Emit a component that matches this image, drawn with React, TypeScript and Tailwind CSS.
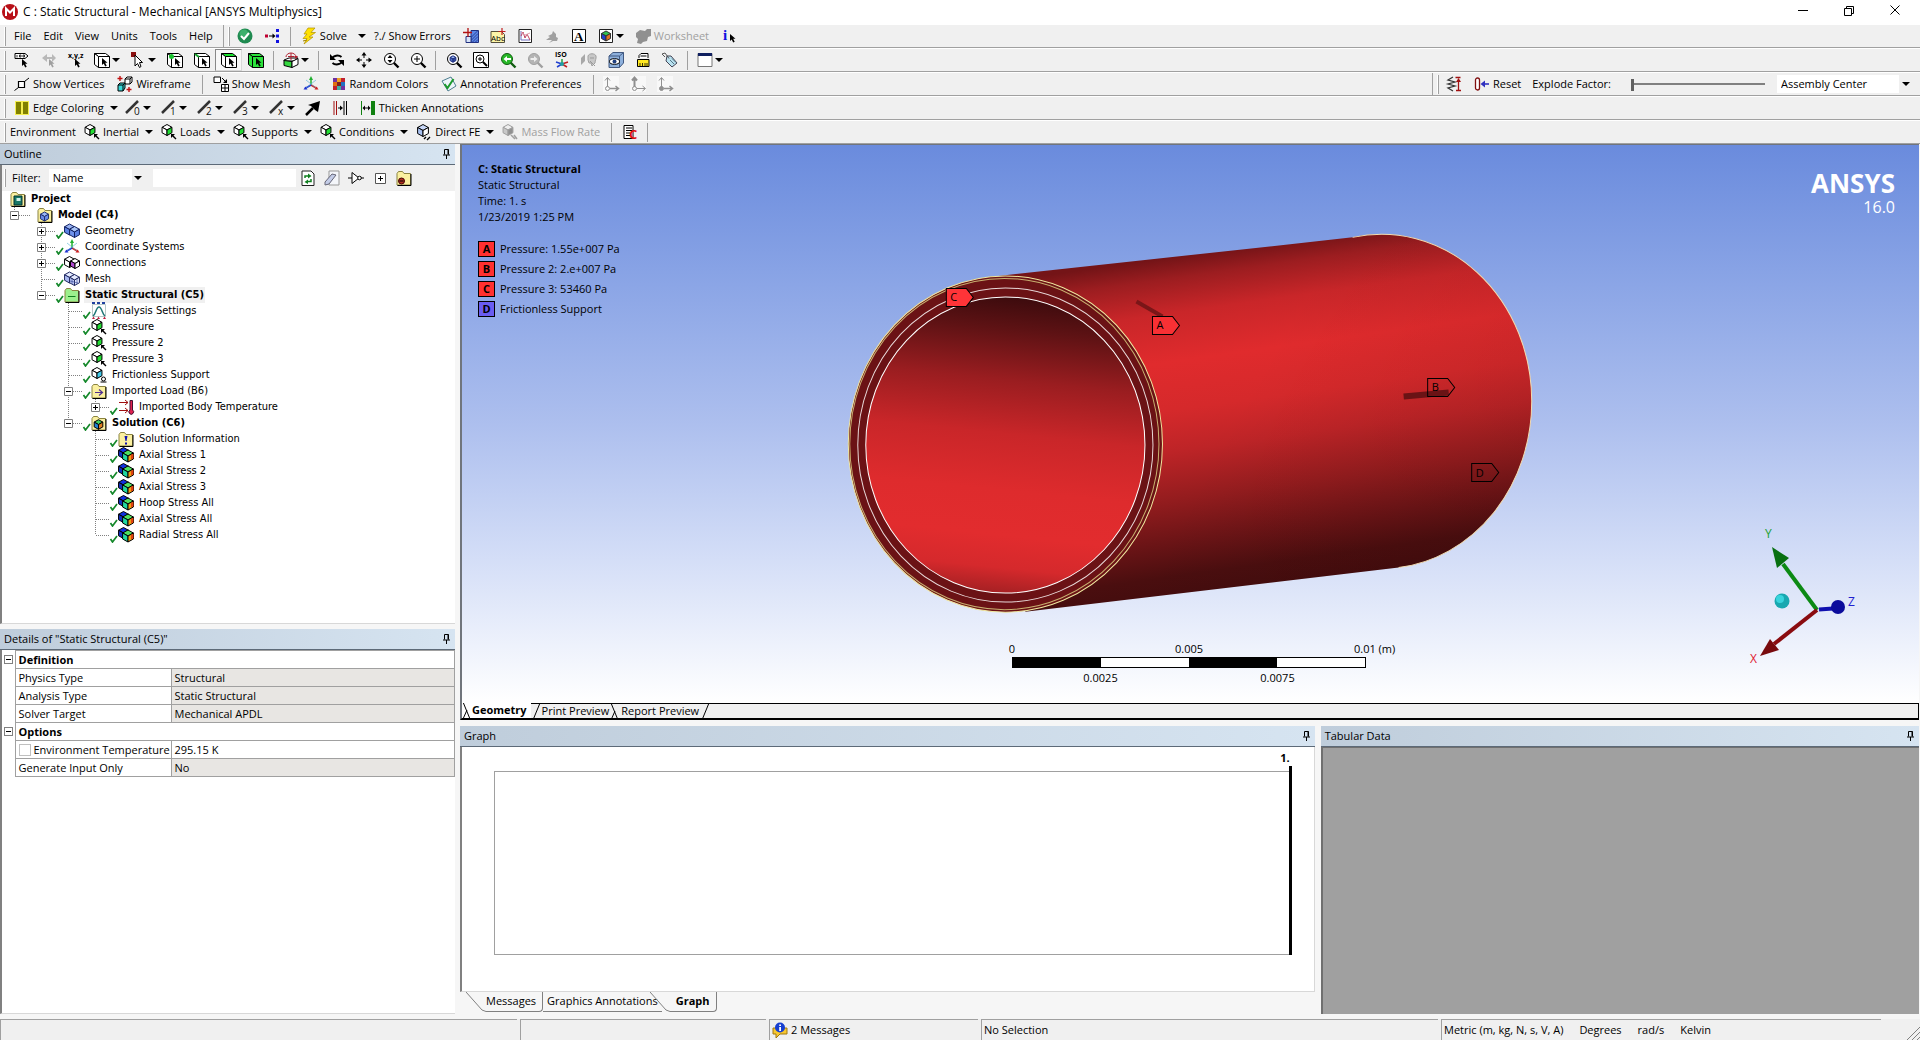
import { Fragment, useState, type ReactNode } from "react";

type HexProps = {
  x: number;
  y: number;
  r: number;
  top: string;
  left: string;
  right: string;
  stroke?: string;
};

function Hex({ x, y, r, top, left, right, stroke = "#000" }: HexProps) {
  const w = r * 0.9;
  const h = r / 2;
  return (
    <g stroke={stroke} strokeWidth={1} strokeLinejoin="round">
      <path d={`M${x} ${y - r}l${w} ${h}l${-w} ${h}l${-w} ${-h}z`} fill={top} />
      <path d={`M${x - w} ${y - h}l${w} ${h}v${r}l${-w} ${-h}z`} fill={left} />
      <path d={`M${x + w} ${y - h}l${-w} ${h}v${r}l${w} ${-h}z`} fill={right} />
    </g>
  );
}

function Pointer({ x, y, fill = "#000" }: { x: number; y: number; fill?: string }) {
  return <path d={`M${x} ${y}v7l1.7 -1.5l1.5 3l1.5 -0.7l-1.5 -3h2.3z`} fill={fill} />;
}

function Box({ front = "#fff", top = "#fff", side = "#fff" }) {
  return (
    <g stroke="#000">
      <path d="M0.5 1.5h11l4 3h-11z" fill={top} />
      <path d="M0.5 1.5l4 3v11l-4-3z" fill={side} />
      <path d="M4.5 4.5h11v11h-11z" fill={front} />
    </g>
  );
}

function Folder({ fill = "#fbf0a0", children }: { fill?: string; children?: ReactNode }) {
  return (
    <>
      <path d="M1 3.5L2.5 1.5h4L8 3.5h6.5V15H1z" fill={fill} stroke="#8a8340" />
      <path d="M15 4v11.5H1.5" fill="none" stroke="#000" />
      {children}
    </>
  );
}

function Lens({ glass = "#fff", stroke = "#000" }) {
  return (
    <>
      <path d="M10.5 10.5l5 5" stroke={stroke} strokeWidth={2.4} />
      <circle cx={7} cy={7} r={5.5} fill={glass} stroke={stroke} />
    </>
  );
}

function Load() {
  return (
    <>
      <Hex x={6} y={6} r={5.5} top="#fff" left="#fff" right="#22dd33" />
      <path d="M10 10h4l-1.5 1.5 3 3-1 1-3-3L10 14z" fill="#000" />
    </>
  );
}

function Result() {
  return (
    <>
      <Hex x={5.5} y={6} r={5.5} top="#1030e0" left="#1030c0" right="#10a0e0" />
      <Hex x={10} y={9} r={6} top="#50e060" left="#20d8a0" right="#f0a010" />
      <path d="M13 8l2.4-1.3v4.5L13 12.5z" fill="#e04010" />
    </>
  );
}

function Edge({ mark }: { mark: string }) {
  return (
    <>
      <path d="M1 13L13 1" stroke="#333" strokeWidth={2.5} />
      <text x={9} y={15} fontSize={10} fill="#111">
        {mark}
      </text>
    </>
  );
}

const axes = (
  <>
    <path d="M8 10V2" stroke="#20b030" strokeWidth={1.5} />
    <path d="M8 0l2 4H6z" fill="#20b030" />
    <path d="M8 9l6 3.5" stroke="#d02020" strokeWidth={1.5} />
    <path d="M15.5 13.5h-4l2-3z" fill="#d02020" />
    <path d="M8 9l-6 3.5" stroke="#2030d0" strokeWidth={1.5} />
    <path d="M0.5 13.5h4l-2-3z" fill="#2030d0" />
    <path d="M3 4l10 8M13 4L3 12" stroke="#50b0d0" strokeWidth={0.6} />
  </>
);

const triad = (filled: boolean, bold: boolean) => (
  <>
    <rect width={16} height={16} fill="#f8f8f8" />
    <path d="M4.5 11V2M2 4.5L4.5 1.5 7 4.5" fill="none" stroke="#909090" strokeWidth={bold ? 2 : 1} />
    <path d="M7 12.5h8M12.5 10l3 2.5-3 2.5" fill="none" stroke="#909090" strokeWidth={bold ? 1 : 1.5} />
    <circle cx={4.5} cy={12.5} r={2} fill={filled ? "#909090" : "#f8f8f8"} stroke="#909090" />
  </>
);

const icons = {
  check: (
    <>
      <circle cx={8} cy={8} r={7.5} fill="#1f8a50" />
      <circle cx={7} cy={6} r={4.5} fill="#3cb06c" />
      <path d="M4 8l3 3 5-6" fill="none" stroke="#fff" strokeWidth={2} />
    </>
  ),
  dots: (
    <>
      <path d="M1 6.5h3v3H1z" fill="#c00030" />
      <path d="M5 8h5" stroke="#000" />
      <path d="M8.5 5.5L11.5 8l-3 2.5z" fill="#000" />
      <path d="M12 1h3v3h-3zM12 6.5h3v3h-3zM12 12h3v3h-3z" fill="#1010e0" />
    </>
  ),
  bolt: (
    <>
      <path d="M7 0h7l-4 4.5h4.5L8 9h4L3 16l3-5.5H2L6 6H3z" fill="#ffe100" stroke="#b09000" strokeWidth={0.7} />
      <path d="M2 13l4-1" stroke="#a08000" />
    </>
  ),
  section: (
    <>
      <path d="M8 2.5h7.5v12H8z" fill="#5b86e8" stroke="#203080" />
      <path d="M3 8.5h5v6H3z" fill="#d7e3f8" stroke="#203080" />
      <path d="M8.5 9l6-6M8.5 12l6.5-6.5M9 14.5l6-6M12 14.5l3-3" stroke="#203080" strokeWidth={0.8} />
      <path d="M5 0v9M0 4.5h9" stroke="#b01010" strokeWidth={1.3} />
    </>
  ),
  abc: (
    <>
      <path d="M1 3.5h10.5l3 3v8H1z" fill="#fdf5a8" stroke="#55503a" />
      <text x={1} y={13} fontSize={8}>
        Abc
      </text>
      <path d="M12 0v7M8.5 3.5h7" stroke="#c02020" strokeWidth={1.2} />
    </>
  ),
  chart: (
    <>
      <path d="M2 1.5h12.5v13H2z" fill="#fff" stroke="#222" />
      <path d="M4 3v9h9" fill="none" stroke="#7070c0" />
      <path d="M4 8l2-4 2 6 2-4 3 6" fill="none" stroke="#c04060" />
      <path d="M4 4l4 3 5-2" fill="none" stroke="#e0a0b0" />
    </>
  ),
  comment: <path d="M5 15l3-3H2l4-3-2-1 4-2 1-3 3 3v3l2 1-1 3H9z" fill="#a0a0a0" />,
  letter: (
    <>
      <path d="M1.5 1.5h13v13h-13z" fill="#fff" stroke="#111" />
      <text x={3} y={13} fontSize={13} fontWeight={700} className="font-['Liberation_Serif',serif]">
        A
      </text>
    </>
  ),
  image: (
    <>
      <path d="M1.5 1.5h13v13h-13z" fill="#fff" stroke="#222" />
      <Hex x={8} y={8} r={5} top="#30c050" left="#2040d0" right="#e07020" stroke="#333" />
    </>
  ),
  worksheet: <path d="M1 5l4-3 5 1 2-2h4v7l-3 1-1 4-4 1-2 2-4-1 1-4-2-2z" fill="#909090" />,
  info: (
    <>
      <text x={1} y={12} fontSize={15} fontWeight={700} fill="#1010e0" className="font-['Liberation_Serif',serif]">
        i
      </text>
      <Pointer x={8} y={6} />
    </>
  ),
  tag: (
    <>
      <path d="M1 1.5h10l3 2.5-3 2.5H1z" fill="#fff" stroke="#000" />
      <path d="M3 3v2.500M5.5 3v2H7V3zM9 3v2h1.5V3z" stroke="#000" fill="none" strokeWidth={0.8} />
      <Pointer x={8} y={7} />
    </>
  ),
  tagOff: (
    <>
      <path d="M1 6l5-4v3h5V2l4 4-4 4V7H6v3z" fill="#b8b8b8" />
      <Pointer x={8} y={7} fill="#a0a0a0" />
    </>
  ),
  xyz: (
    <>
      <text x={0} y={6} fontSize={7} fontWeight={700}>
        x,y,z
      </text>
      <Pointer x={7} y={7} />
    </>
  ),
  boxMode: (
    <>
      <Box />
      <Pointer x={8} y={6} />
    </>
  ),
  pick: (
    <>
      <path d="M1 0h5v5H1z" fill="#8b1010" />
      <path d="M5 3v11l2.5-2.5 2 4 1.5-1-1.5-4h3z" fill="#fff" stroke="#000" />
    </>
  ),
  selVertex: (
    <>
      <Box />
      <circle cx={4.5} cy={4.5} r={2.5} fill="#19c22e" />
      <Pointer x={8} y={6} />
    </>
  ),
  selEdge: (
    <>
      <Box />
      <path d="M1 2l4 3" stroke="#19a22e" strokeWidth={2} />
      <Pointer x={8} y={6} />
    </>
  ),
  selFace: (
    <>
      <Box top="#19e22e" />
      <Pointer x={8} y={6} />
    </>
  ),
  selBody: (
    <>
      <Box front="#2be23c" top="#2be23c" side="#2be23c" />
      <Pointer x={8} y={6} />
    </>
  ),
  extend: (
    <>
      <path d="M1 8l5-2h9l-4 3H1z" fill="#fff" stroke="#000" />
      <path d="M1 8.5l8 1v6l-8-2z" fill="#35d840" stroke="#000" />
      <path d="M9 9.5l6-3v6l-6 3z" fill="#fff" stroke="#000" />
      <path d="M3 5a5 4 0 0 1 10 0M8 1v7M5 4.5h6" fill="none" stroke="#b02030" />
      <path d="M11 4h4l-2 3z" fill="#b02030" />
    </>
  ),
  rotate: (
    <>
      <path d="M3 6.5a5.5 4 0 0 1 9.5 -1.5M13 9.5a5.5 4 0 0 1 -9.5 1.5" fill="none" stroke="#000" strokeWidth={2} />
      <path d="M1 2v6h6zM15 14V8H9z" fill="#000" />
    </>
  ),
  pan: (
    <>
      <path d="M8 2v4M8 10v4M2 8h4M10 8h4" stroke="#000" />
      <path d="M8 0l2.5 3.5h-5zM8 16l2.5-3.5h-5zM0 8l3.5-2.5v5zM16 8l-3.5-2.5v5z" fill="#000" />
    </>
  ),
  zoom: (
    <>
      <Lens />
      <path d="M7 3l2.5 3h-5zM7 11l2.5-3h-5z" fill="#000" />
    </>
  ),
  zoomIn: (
    <>
      <Lens />
      <path d="M7 4v6M4 7h6" stroke="#000" />
    </>
  ),
  zoomFit: (
    <>
      <Lens />
      <Hex x={7} y={7} r={3.2} top="#9ab8f0" left="#5070c8" right="#304aa0" stroke="#203080" />
    </>
  ),
  zoomBox: (
    <>
      <path d="M0.5 0.5h15v15H0.5z" fill="#fff" stroke="#000" />
      <circle cx={7} cy={7} r={4} fill="none" stroke="#000" />
      <path d="M10 10l4 4" stroke="#000" strokeWidth={2} />
      <path d="M5 7h4M7 5v4" stroke="#000" />
    </>
  ),
  zoomPrev: (
    <>
      <Lens glass="#28b828" stroke="#105c10" />
      <path d="M3.5 7L7 4v2h4v2H7v2z" fill="#fff" />
    </>
  ),
  zoomNext: (
    <>
      <Lens glass="#b4b4b4" stroke="#a0a0a0" />
      <path d="M10.5 7L7 4v2H3.5v2H7v2z" fill="#eee" />
    </>
  ),
  iso: (
    <>
      <text x={1} y={5} fontSize={7} fontWeight={700}>
        ISO
      </text>
      <path d="M8 13V7" stroke="#20a040" strokeWidth={1.5} />
      <path d="M8 12l-6-2M8 12l-5 3" stroke="#2040d0" strokeWidth={1.5} />
      <path d="M8 12l6-2M8 12l5 3" stroke="#c02020" strokeWidth={1.5} />
      <circle cx={8} cy={12} r={2} fill="#20a0a0" />
    </>
  ),
  lookAt: (
    <>
      <path d="M0 6l4-4v7L0 13z" fill="#a8a8a8" />
      <path d="M7 4c1-3 7-3 8 0 .5 3-1 4-1 7l-3 3-1-3H8L7 8z" fill="#c8c8c8" stroke="#a0a0a0" />
      <path d="M9 6h4M9 9l5 5" stroke="#999" />
    </>
  ),
  eye: (
    <>
      <path d="M1 4l4-3.5h10.5V11l-4 4.5H1z" fill="#8db0dc" stroke="#405880" />
      <path d="M1 4h10.5v11.5M11.5 4l4-3.5" fill="none" stroke="#405880" />
      <ellipse cx={6.5} cy={9.5} rx={5} ry={2.8} fill="#fff" stroke="#000" />
      <circle cx={6.5} cy={9.5} r={2} fill="#204080" />
    </>
  ),
  ruler: (
    <>
      <path d="M4 6V3.5L6 1.5h7V6" fill="#fff" stroke="#000" />
      <path d="M5.5 4h6" stroke="#000" />
      <path d="M2.5 7.5H14v7H2.5z" fill="#ffe820" stroke="#000" />
      <path d="M5 11v3M7.5 11v3M10 11v3M12 11v3" stroke="#000" strokeWidth={0.8} />
    </>
  ),
  label: (
    <>
      <path d="M5 4h4l6 7-5 4-6-6z" fill="#b9e2f0" stroke="#445" />
      <path d="M8 8l4 4M10 6.5l4 4" stroke="#578" />
      <path d="M7 6.5L3 1 0 2l3 3" fill="none" stroke="#555" />
    </>
  ),
  viewport: (
    <>
      <path d="M1 1.5h14v13H1z" fill="#fff" stroke="#777" />
      <path d="M1 1h14v3H1z" fill="#102060" />
    </>
  ),
  vertex: (
    <>
      <path d="M4.5 5.5h6v6h-6z" fill="#fff" stroke="#000" strokeWidth={1.2} />
      <path d="M10.5 5.5L15 2M4.5 11.5l-4 3" stroke="#000" />
    </>
  ),
  wire: (
    <>
      <path d="M8 3l2-2h5v5l-2 2H8zM8 3h5v5M13 3l2-2" fill="#fff" stroke="#000" />
      <path d="M1 9l2-2h5v5l-2 3H1zM1 9h5v6M6 9l2-2" fill="#38d8d8" stroke="#000" />
      <path d="M3 0v5M0.5 2.5h5M12 11v5M9.5 13.5h5" stroke="#c01010" strokeWidth={1.4} />
    </>
  ),
  mesh: (
    <>
      <path d="M1 1h6.5v5.5H1z" fill="#fff" stroke="#000" />
      <path d="M8.5 8.5h7v7h-7zM12 8.5v7M8.5 12h7" fill="#fff" stroke="#000" />
      <path d="M9 2l4 4" stroke="#000" />
      <path d="M14 3v4h-4z" fill="#000" />
    </>
  ),
  axes,
  palette: (
    <>
      <path d="M2 2h4v4H2zM10 10h4v4h-4z" fill="#7030a0" />
      <path d="M6 2h4v4H6z" fill="#f0a020" />
      <path d="M10 2h4v4h-4zM2 10h4v4H2z" fill="#c02030" />
      <path d="M2 6h4v4H2z" fill="#e07010" />
      <path d="M6 6h4v4H6z" fill="#802020" />
      <path d="M10 6h4v4h-4z" fill="#2070c0" />
      <path d="M6 10h4v4H6z" fill="#40b0a0" />
    </>
  ),
  annotate: (
    <>
      <path d="M1 5l9-4 5 9-8 5z" fill="#eef5fa" stroke="#4f7f90" />
      <path d="M3.5 8l3 4 6-9" fill="none" stroke="#1c9a2c" strokeWidth={2} />
    </>
  ),
  triadA: triad(false, false),
  triadB: triad(false, true),
  triadC: triad(true, false),
  edges: (
    <>
      <path d="M1 1h14v14H1z" fill="#f4ee50" />
      <path d="M2 2h5v12H2zM9 2h5v12H9z" fill="#808000" />
    </>
  ),
  edge0: <Edge mark="0" />,
  edge1: <Edge mark="1" />,
  edge2: <Edge mark="2" />,
  edge3: <Edge mark="3" />,
  edgeX: <Edge mark="x" />,
  direction: (
    <>
      <path d="M1 15l7-7" stroke="#000" strokeWidth={2.5} />
      <path d="M15 1l-2 11-3-2-4-4-3-1z" fill="#000" />
    </>
  ),
  thickA: (
    <>
      <path d="M2 1v14M4.5 1v14" stroke="#a01010" />
      <path d="M12 1v14M14.5 1v14" stroke="#000" />
      <path d="M6 8h3" stroke="#000" />
      <path d="M8 5.5L11 8l-3 2.5z" fill="#000" />
    </>
  ),
  thickB: (
    <>
      <path d="M1.5 1v14" stroke="#108010" />
      <path d="M11 1h4v14h-4z" fill="#108010" />
      <path d="M4 8h5" stroke="#000" />
      <path d="M2.5 8l2.5-2.5v5zM10.5 8L8 5.5v5z" fill="#000" />
    </>
  ),
  load: <Load />,
  direct: (
    <>
      <Hex x={7} y={6.5} r={6} top="#c8d8f8" left="#a8c0f0" right="#fff" />
      <path d="M8 15l2-2M11 16l3-3" stroke="#000" strokeWidth={1.4} />
    </>
  ),
  mass: (
    <>
      <Hex x={6} y={6} r={5.5} top="#eee" left="#c8c8c8" right="#909090" stroke="#a0a0a0" />
      <path d="M9 11l4 4M12 11l3 4" stroke="#a0a0a0" strokeWidth={1.5} />
    </>
  ),
  commands: (
    <>
      <path d="M2 1.5h9v13H2z" fill="#fff" stroke="#000" />
      <path d="M4 4h6M4 6.5h6M4 9h4M4 11.5h4" stroke="#000" />
      <text x={7} y={15} fontSize={13} fontWeight={700} fill="#e01010">
        C
      </text>
    </>
  ),
  spring: (
    <>
      <path d="M7 1L2 4l7 2-7 2 7 2-7 2 5 3" fill="none" stroke="#333" strokeWidth={1.3} />
      <path d="M12.5 14V4M9.5 1.5h5M10 14.5h5" stroke="#a01010" strokeWidth={1.3} />
      <path d="M12.5 2l2.5 4h-5z" fill="#a01010" />
    </>
  ),
  reset: (
    <>
      <rect x={1.5} y={2} width={4} height={12} rx={2} fill="#fff" stroke="#801010" strokeWidth={1.3} />
      <path d="M9 8h6" stroke="#3030c0" strokeWidth={1.6} />
      <path d="M6.5 8L11 4.5v7z" fill="#3030c0" />
    </>
  ),
  refresh: (
    <>
      <path d="M2 1h9l3 3v11.5H2z" fill="#fff" stroke="#222" />
      <path d="M5 8V6h4M11 9v2.5H7" fill="none" stroke="#108020" strokeWidth={1.5} />
      <path d="M8 3.5L11.5 6 8 8.5zM8 9.5L4.5 12 8 14z" fill="#108020" />
    </>
  ),
  eraser: (
    <>
      <path d="M5 1h10v14H5z" fill="#f4f6fa" stroke="#999" />
      <path d="M1 12l7-8 4 1-7 9-4 1z" fill="#c4cde8" stroke="#667" />
    </>
  ),
  branch: (
    <>
      <path d="M0 8h4M12 8h4" stroke="#000" />
      <path d="M4 2.5L11 8l-7 5.5z" fill="#fff" stroke="#000" />
      <circle cx={11.5} cy={8} r={1.8} fill="#fff" stroke="#000" />
    </>
  ),
  expand: (
    <>
      <path d="M3.5 3.5h10v10h-10z" fill="#fff" stroke="#555" />
      <path d="M8.5 6v5M6 8.5h5" stroke="#000" />
    </>
  ),
  folderStop: (
    <Folder>
      <circle cx={5.5} cy={11} r={3} fill="#b03020" stroke="#400" />
      <path d="M3.5 11h4" stroke="#000" />
    </Folder>
  ),
  project: (
    <Folder>
      <path d="M4 5h8v9H4z" fill="#187868" stroke="#033" />
      <path d="M6.5 7h4v3h-4z" fill="#d0f0e8" />
    </Folder>
  ),
  model: (
    <Folder>
      <Hex x={7.5} y={9.5} r={4.5} top="#9ab8f8" left="#6a8be8" right="#6a8be8" stroke="#203070" />
    </Folder>
  ),
  geometry: (
    <>
      <Hex x={5.5} y={6.5} r={5.5} top="#9ab4f4" left="#5c82e4" right="#5c82e4" stroke="#102060" />
      <Hex x={10.5} y={9} r={5.5} top="#a8c4f8" left="#6e92ec" right="#5c82e4" stroke="#102060" />
    </>
  ),
  connections: (
    <>
      <Hex x={5.5} y={7} r={5.5} top="#fff" left="#fff" right="#a030c0" />
      <Hex x={11} y={8.5} r={5} top="#fff" left="#b048d0" right="#fff" />
    </>
  ),
  meshTree: (
    <>
      <Hex x={5.5} y={6.5} r={5.5} top="#e4eaff" left="#a8b8f0" right="#c8d4f8" stroke="#202860" />
      <Hex x={10.5} y={9} r={5.5} top="#e4eaff" left="#c0ccf8" right="#e4eaff" stroke="#202860" />
      <path d="M8 8v5M13 8v5M6 10l8 2" stroke="#4050a0" strokeWidth={0.7} />
    </>
  ),
  environment: (
    <Folder fill="#9cf08c">
      <path d="M4 9.5h7.5" stroke="#108020" />
    </Folder>
  ),
  settings: (
    <>
      <path d="M1.5 1.5h13v12h-13z" fill="#fff" stroke="#b8c8c8" />
      <path d="M2 13c3-2 3-9 6-9s3 7 6 9" fill="none" stroke="#207878" strokeWidth={1.5} />
      <path d="M1 0h3M6 0h3M11 0h3" stroke="#2040a0" strokeWidth={2} />
      <path d="M1 16l1.5-2.5L4 16zM6 16l1.5-2.5L9 16zM12 16l1.5-2.5L15 16z" fill="#c02040" />
    </>
  ),
  support: (
    <>
      <Hex x={6} y={6} r={5.5} top="#fff" left="#fff" right="#40c8e8" />
      <circle cx={12.5} cy={12} r={2} fill="#fff" stroke="#000" />
      <path d="M9.5 15h6" stroke="#000" />
    </>
  ),
  imported: (
    <Folder>
      <path d="M4 9.5h7M8 6.5l3.5 3-3.5 3" fill="none" stroke="#503090" strokeWidth={1.2} />
    </Folder>
  ),
  temperature: (
    <>
      <path d="M1 3.5h9M1 11.5h9M7 1l3 2.5L7 6M7 9l3 2.5L7 14" fill="none" stroke="#a01010" />
      <path d="M12 1.5h2.5V11a2.3 2.3 0 1 1-2.5 0z" fill="#e02050" stroke="#401030" />
    </>
  ),
  solution: (
    <Folder>
      <Hex x={7.5} y={9.5} r={4.8} top="#40d060" left="#2080d0" right="#e08020" />
    </Folder>
  ),
  solutionInfo: (
    <Folder>
      <path d="M6.5 5h3l-1 5h-1zM7 11.5h2v2H7z" fill="#1010b0" />
    </Folder>
  ),
  result: <Result />,
  messages: (
    <>
      <path d="M1 6h14v6H8l-4 4v-4H1z" fill="#f8c830" stroke="#a07810" />
      <circle cx={8} cy={5.5} r={5} fill="#1840d0" />
      <path d="M7.2 2.5H9V4H7.2zM7.2 5H9v4H7.2z" fill="#fff" />
    </>
  ),
} satisfies Record<string, ReactNode>;

type IconName = keyof typeof icons;

function Icon({ name }: { name: IconName }) {
  return (
    <svg viewBox="0 0 16 16" className="size-4 shrink-0 overflow-visible" fill="#000" aria-hidden="true">
      {icons[name]}
    </svg>
  );
}

function Caret() {
  return (
    <svg viewBox="0 0 8 4" className="h-1 w-2 shrink-0" aria-hidden="true">
      <path d="M0 0h8L4 4z" />
    </svg>
  );
}

const Grip = () => <span className="mr-0.5 ml-1 h-[19px] w-0.5 shrink-0 border-r border-[#a0a0a0] bg-white" />;
const Divider = () => <span className="mx-1 h-[19px] w-px shrink-0 bg-[#a0a0a0]" />;

type ToolProps = {
  icon?: IconName;
  label?: string;
  menu?: boolean;
  split?: boolean;
  pressed?: boolean;
  disabled?: boolean;
};

function Tool({ icon, label, menu, split, pressed, disabled }: ToolProps) {
  if (!label) {
    return (
      <button
        aria-label={icon}
        disabled={disabled}
        className={`flex h-[22px] shrink-0 items-center justify-center gap-[2px] ${menu ? "w-9" : "w-[27px]"} ${
          pressed ? "border border-[#d8d8d8] border-l-[#888] border-t-[#888] bg-[#f8f8f8]" : ""
        }`}
      >
        {icon && <Icon name={icon} />}
        {menu && <Caret />}
      </button>
    );
  }
  return (
    <button
      disabled={disabled}
      className={`flex h-[22px] shrink-0 items-center gap-[3px] pl-1.5 whitespace-nowrap disabled:text-[#a0a0a0] ${
        menu ? "pr-0.5" : "pr-[7px]"
      }`}
    >
      {icon && <Icon name={icon} />}
      {label}
      {menu && (
        <span className={split ? "pl-2" : "pl-[3px]"}>
          <Caret />
        </span>
      )}
    </button>
  );
}

function ToolRow({ children }: { children: ReactNode }) {
  return <div className="flex h-6 items-center border-t border-b border-[#a0a0a0] border-t-white">{children}</div>;
}

function Toolbars() {
  const [factor, setFactor] = useState(0);

  return (
    <header className="shrink-0 bg-[#f0f0f0]">
      <ToolRow>
        <Grip />
        <nav className="flex items-center gap-3 px-1.5">
          {["File", "Edit", "View", "Units", "Tools", "Help"].map((item) => (
            <button key={item}>{item}</button>
          ))}
        </nav>
        <span className="ml-1 h-full w-px bg-[#a0a0a0]" />
        <Grip />
        <Tool icon="check" />
        <Tool icon="dots" />
        <Divider />
        <Tool icon="bolt" label="Solve" menu split />
        <Tool label="?./ Show Errors" />
        <Tool icon="section" />
        <Tool icon="abc" />
        <Tool icon="chart" />
        <Tool icon="comment" disabled />
        <Tool icon="letter" />
        <Tool icon="image" menu />
        <Tool icon="worksheet" label="Worksheet" disabled />
        <Tool icon="info" />
      </ToolRow>
      <ToolRow>
        <Grip />
        <Tool icon="tag" />
        <Tool icon="tagOff" disabled />
        <Tool icon="xyz" />
        <Tool icon="boxMode" menu />
        <Tool icon="pick" menu />
        <Tool icon="selVertex" />
        <Tool icon="selEdge" />
        <Tool icon="selFace" pressed />
        <Tool icon="selBody" />
        <Divider />
        <Tool icon="extend" menu />
        <Divider />
        <Tool icon="rotate" />
        <Tool icon="pan" />
        <Tool icon="zoom" />
        <Tool icon="zoomIn" />
        <Divider />
        <Tool icon="zoomFit" />
        <Tool icon="zoomBox" />
        <Tool icon="zoomPrev" />
        <Tool icon="zoomNext" disabled />
        <Tool icon="iso" />
        <Tool icon="lookAt" disabled />
        <Tool icon="eye" />
        <Tool icon="ruler" />
        <Tool icon="label" />
        <Divider />
        <Tool icon="viewport" menu />
      </ToolRow>
      <ToolRow>
        <Grip />
        <Tool icon="vertex" label="Show Vertices" />
        <Tool icon="wire" label="Wireframe" />
        <Divider />
        <Tool icon="mesh" label="Show Mesh" />
        <Tool icon="axes" />
        <Tool icon="palette" label="Random Colors" />
        <Tool icon="annotate" label="Annotation Preferences" />
        <Divider />
        <Tool icon="triadA" disabled />
        <Tool icon="triadB" disabled />
        <Tool icon="triadC" disabled />
        <div className="ml-auto flex h-full items-center border-l border-[#a0a0a0] pr-2">
          <Grip />
          <Tool icon="spring" />
          <Tool icon="reset" label="Reset" />
          <label htmlFor="explode" className="pl-1">
            Explode Factor:
          </label>
          <input
            id="explode"
            type="range"
            min={0}
            max={100}
            value={factor}
            onChange={(event) => setFactor(Number(event.target.value))}
            className="mr-3 ml-5 h-4 w-[134px] appearance-none bg-transparent [&::-webkit-slider-runnable-track]:h-0.5 [&::-webkit-slider-runnable-track]:bg-[#808080] [&::-webkit-slider-thumb]:-mt-1 [&::-webkit-slider-thumb]:h-3 [&::-webkit-slider-thumb]:w-[3px] [&::-webkit-slider-thumb]:appearance-none [&::-webkit-slider-thumb]:bg-[#606060]"
          />
          <Picker label="Assembly origin" options={["Assembly Center"]} className="w-[135px]" />
        </div>
      </ToolRow>
      <ToolRow>
        <Grip />
        <Tool icon="edges" label="Edge Coloring" menu />
        <Tool icon="edge0" menu />
        <Tool icon="edge1" menu />
        <Tool icon="edge2" menu />
        <Tool icon="edge3" menu />
        <Tool icon="edgeX" menu />
        <Tool icon="direction" />
        <Tool icon="thickA" />
        <Tool icon="thickB" label="Thicken Annotations" />
      </ToolRow>
      <ToolRow>
        <Grip />
        <span className="px-0.5">Environment</span>
        <Tool icon="load" label="Inertial" menu />
        <Tool icon="load" label="Loads" menu />
        <Tool icon="load" label="Supports" menu />
        <Tool icon="load" label="Conditions" menu />
        <Tool icon="direct" label="Direct FE" menu />
        <Tool icon="mass" label="Mass Flow Rate" disabled />
        <Divider />
        <Tool icon="commands" />
        <Divider />
      </ToolRow>
    </header>
  );
}

type PickerProps = { label: string; options: string[]; className: string };

function Picker({ label, options, className }: PickerProps) {
  return (
    <div className={`relative h-[18px] bg-white ${className}`}>
      <select aria-label={label} className="size-full appearance-none bg-transparent pl-1 outline-none">
        {options.map((option) => (
          <option key={option}>{option}</option>
        ))}
      </select>
      <span className="pointer-events-none absolute inset-y-0 right-0 flex w-[13px] items-center justify-center bg-[#f0f0f0]">
        <Caret />
      </span>
    </div>
  );
}

function PanelHeader({ title }: { title: string }) {
  return (
    <div className="flex h-[21px] shrink-0 items-center justify-between border-b border-[#5d6a78] bg-linear-to-r from-[#bfcddb] to-[#d6e4f1] px-1">
      <h2>{title}</h2>
      <button aria-label={`Pin ${title}`}>
        <svg viewBox="0 0 8 10" className="h-[10px] w-2" aria-hidden="true">
          <path d="M1.5 5.5v-5h4v5M0 6h7M3.5 6v4M5 0.5v5" fill="none" stroke="#000" />
        </svg>
      </button>
    </div>
  );
}

type TreeRow = {
  level: number;
  label: string;
  icon: IconName;
  toggle?: "+" | "-";
  bold?: boolean;
  done?: boolean;
};

const tree: TreeRow[] = [
  { level: 0, label: "Project", icon: "project", bold: true },
  { level: 1, label: "Model (C4)", icon: "model", toggle: "-", bold: true },
  { level: 2, label: "Geometry", icon: "geometry", toggle: "+", done: true },
  { level: 2, label: "Coordinate Systems", icon: "axes", toggle: "+", done: true },
  { level: 2, label: "Connections", icon: "connections", toggle: "+", done: true },
  { level: 2, label: "Mesh", icon: "meshTree", done: true },
  { level: 2, label: "Static Structural (C5)", icon: "environment", toggle: "-", bold: true, done: true },
  { level: 3, label: "Analysis Settings", icon: "settings", done: true },
  { level: 3, label: "Pressure", icon: "load", done: true },
  { level: 3, label: "Pressure 2", icon: "load", done: true },
  { level: 3, label: "Pressure 3", icon: "load", done: true },
  { level: 3, label: "Frictionless Support", icon: "support", done: true },
  { level: 3, label: "Imported Load (B6)", icon: "imported", toggle: "-", done: true },
  { level: 4, label: "Imported Body Temperature", icon: "temperature", toggle: "+", done: true },
  { level: 3, label: "Solution (C6)", icon: "solution", toggle: "-", bold: true, done: true },
  { level: 4, label: "Solution Information", icon: "solutionInfo", done: true },
  { level: 4, label: "Axial Stress 1", icon: "result", done: true },
  { level: 4, label: "Axial Stress 2", icon: "result", done: true },
  { level: 4, label: "Axial Stress 3", icon: "result", done: true },
  { level: 4, label: "Hoop Stress All", icon: "result", done: true },
  { level: 4, label: "Axial Stress All", icon: "result", done: true },
  { level: 4, label: "Radial Stress All", icon: "result", done: true },
];

// true when a later sibling exists at the given level
function continues(index: number, level: number) {
  for (const row of tree.slice(index + 1)) {
    if (row.level < level) return false;
    if (row.level === level) return true;
  }
  return false;
}

function Branch({ index, level }: { index: number; level: number }) {
  const row = tree[index];
  const own = row.level === level;
  const more = continues(index, level);
  return (
    <svg viewBox="0 0 27 16" className="h-4 w-[27px] shrink-0" fill="none" aria-hidden="true">
      <g stroke="#808080" strokeDasharray="1 1">
        {(own || more) && <path d={`M4.5 0V${more ? 16 : 8}`} />}
        {own && <path d={`M5 8.5H${row.done ? 19 : 20}`} />}
      </g>
      {own && row.toggle && (
        <>
          <path d="M0.5 4.5h8v8h-8z" fill="#fff" stroke="#808080" />
          <path d={row.toggle === "+" ? "M2 8.5h5M4.5 6v5" : "M2 8.5h5"} stroke="#000" />
        </>
      )}
      {own && row.done && <path d="M19.5 12l2 3L26 9" stroke="#14882a" strokeWidth={1.7} />}
    </svg>
  );
}

const filterTools: IconName[] = ["refresh", "eraser", "branch", "expand", "folderStop"];

function Outline() {
  const [selected, setSelected] = useState("Static Structural (C5)");
  const [query, setQuery] = useState("");

  return (
    <section className="flex min-h-0 flex-1 flex-col">
      <PanelHeader title="Outline" />
      <div className="flex min-h-0 flex-1 flex-col overflow-hidden border-b border-l-2 border-[#d8d8d8] border-l-[#808080] bg-white">
        <div className="flex h-[26px] shrink-0 items-center bg-[#f0f0f0]">
          <span className="mr-1.5 ml-0.5 h-[18px] w-0.5 border-r border-[#a0a0a0] bg-white" />
          <label htmlFor="filter">Filter:</label>
          <div className="ml-2">
            <Picker label="Filter by" options={["Name"]} className="w-24" />
          </div>
          <input
            id="filter"
            value={query}
            onChange={(event) => setQuery(event.target.value)}
            className="ml-2 h-[18px] w-[143px] bg-white px-1 outline-none"
          />
          <div className="ml-1 flex gap-2">
            {filterTools.map((name) => (
              <button key={name} aria-label={name}>
                <Icon name={name} />
              </button>
            ))}
          </div>
        </div>
        <ul className="pl-2 font-['DejaVu_Sans_Condensed','DejaVu_Sans',sans-serif] text-[11px] leading-4">
          {tree.map((row, index) => (
            <li key={index} className="flex h-4">
              {Array.from({ length: row.level }, (_, i) => (
                <Branch key={i} index={index} level={i + 1} />
              ))}
              <Icon name={row.icon} />
              <button
                onClick={() => setSelected(row.label)}
                className={`ml-1 px-px whitespace-nowrap ${row.bold ? "font-bold" : ""} ${
                  row.label === selected ? "bg-[#f0f0f0]" : ""
                }`}
              >
                {row.label}
              </button>
            </li>
          ))}
        </ul>
      </div>
    </section>
  );
}

type Detail = { name: string; value: string; locked?: boolean; parameter?: boolean };

const details: { group: string; rows: Detail[] }[] = [
  {
    group: "Definition",
    rows: [
      { name: "Physics Type", value: "Structural", locked: true },
      { name: "Analysis Type", value: "Static Structural", locked: true },
      { name: "Solver Target", value: "Mechanical APDL", locked: true },
    ],
  },
  {
    group: "Options",
    rows: [
      { name: "Environment Temperature", value: "295.15 K", parameter: true },
      { name: "Generate Input Only", value: "No", locked: true },
    ],
  },
];

function Details() {
  return (
    <section className="flex h-[385px] shrink-0 flex-col">
      <PanelHeader title={'Details of "Static Structural (C5)"'} />
      <div className="flex-1 border-b border-l-2 border-[#d8d8d8] border-l-[#808080] bg-white">
        <table className="w-full table-fixed border-collapse text-left">
          <colgroup>
            <col className="w-[13px]" />
            <col className="w-[156px]" />
            <col />
          </colgroup>
          <tbody>
            {details.map(({ group, rows }) => (
              <Fragment key={group}>
                <tr className="h-[18px]">
                  <td className="p-0">
                    <button
                      aria-label={`Collapse ${group}`}
                      className="mx-[2px] flex size-[9px] items-center justify-center border border-[#808080]"
                    >
                      <span className="h-px w-[5px] bg-black" />
                    </button>
                  </td>
                  <th colSpan={2} className="border border-[#a0a0a0] px-[3px] py-0 leading-4 font-bold">
                    {group}
                  </th>
                </tr>
                {rows.map((row) => (
                  <tr key={row.name} className="h-[18px]">
                    <td className="p-0" />
                    <th className="border border-[#a0a0a0] px-[3px] py-0 leading-4 font-normal whitespace-nowrap">
                      {row.parameter ? (
                        <label className="flex items-center gap-[3px]">
                          <input type="checkbox" className="size-3 shrink-0 appearance-none border border-[#c0c0c0]" />
                          {row.name}
                        </label>
                      ) : (
                        row.name
                      )}
                    </th>
                    <td className={`border border-[#a0a0a0] px-[3px] py-0 leading-4 ${row.locked ? "bg-[#e8e6e3]" : ""}`}>
                      {row.value}
                    </td>
                  </tr>
                ))}
              </Fragment>
            ))}
          </tbody>
        </table>
      </div>
    </section>
  );
}

type FlagProps = { x: number; y: number; mark: string; fill?: string };

function Flag({ x, y, mark, fill = "none" }: FlagProps) {
  return (
    <g transform={`translate(${x} ${y})`}>
      <path d="M0 0h20l7 9-7 9H0z" fill={fill} stroke="#000" />
      <text x={4} y={13} fontSize={11}>
        {mark}
      </text>
    </g>
  );
}

const shellPath = "M985 278L1352 238A150 167 0 0 1 1531 402A150 167 0 0 1 1398 568L1025 612z";

function Pipe() {
  return (
    <svg viewBox="462 146 1456 557" className="absolute inset-0 size-full" role="img" aria-label="Pipe model">
      <defs>
        <linearGradient id="shell" gradientUnits="userSpaceOnUse" x1="1180" y1="257" x2="1228" y2="597">
          <stop offset="0" stopColor="#741417" />
          <stop offset="0.06" stopColor="#9c1d20" />
          <stop offset="0.16" stopColor="#c92629" />
          <stop offset="0.3" stopColor="#e02b2d" />
          <stop offset="0.44" stopColor="#d5292b" />
          <stop offset="0.56" stopColor="#bd2427" />
          <stop offset="0.7" stopColor="#931c1e" />
          <stop offset="0.82" stopColor="#6b1416" />
          <stop offset="0.92" stopColor="#4a0e0f" />
          <stop offset="1" stopColor="#420c0d" />
        </linearGradient>
        <linearGradient id="shade" gradientUnits="userSpaceOnUse" x1="1300" y1="300" x2="1560" y2="450">
          <stop offset="0" stopColor="#200000" stopOpacity="0" />
          <stop offset="1" stopColor="#200000" stopOpacity="0.1" />
        </linearGradient>
        <linearGradient id="bore" gradientUnits="userSpaceOnUse" x1="1020" y1="298" x2="990" y2="594">
          <stop offset="0" stopColor="#3c0b0d" />
          <stop offset="0.11" stopColor="#5e1214" />
          <stop offset="0.28" stopColor="#9a1d20" />
          <stop offset="0.46" stopColor="#c92629" />
          <stop offset="0.65" stopColor="#de2b2d" />
          <stop offset="0.8" stopColor="#e22c2e" />
          <stop offset="0.91" stopColor="#d5292c" />
          <stop offset="1" stopColor="#a32023" />
        </linearGradient>
      </defs>
      <path d={shellPath} fill="url(#shell)" />
      <path d={shellPath} fill="url(#shade)" />
      <path d="M1352 238A150 167 0 0 1 1531 402A150 167 0 0 1 1398 568" fill="none" stroke="#f3dcb0" />
      <g fill="none">
        <ellipse cx="1005" cy="444.5" rx="157" ry="168" fill="#6b1215" stroke="#f0e8a0" />
        <ellipse cx="1004" cy="444.5" rx="154.5" ry="165.5" stroke="#c8b070" />
        <ellipse cx="1005" cy="445.5" rx="147.5" ry="157" stroke="#e8d8d8" />
        <ellipse cx="1005" cy="445.5" rx="139.5" ry="148" fill="url(#bore)" stroke="#fff" />
      </g>
      <path d="M1136 302l26 15" stroke="#7a1618" strokeWidth={4} />
      <path d="M1403 397l45-4" stroke="#6a1315" strokeWidth={6} />
      <Flag x={946} y={289} mark="C" fill="#ff3438" />
      <Flag x={1152} y={317} mark="A" fill="#f83034" />
      <Flag x={1427} y={379} mark="B" />
      <Flag x={1471} y={464} mark="D" />
    </svg>
  );
}

function Triad() {
  return (
    <svg
      viewBox="1746 520 112 156"
      className="absolute right-[61px] bottom-[27px] h-[156px] w-28"
      role="img"
      aria-label="Orientation"
    >
      <path d="M1817 610l-34-46" stroke="#0c8a14" strokeWidth={4} />
      <path d="M1772 547l17 11-12 10z" fill="#087010" />
      <path d="M1817 610l-43 34" stroke="#8a0c10" strokeWidth={4} />
      <path d="M1760 656l10-17 9 11z" fill="#780a0e" />
      <path d="M1819 609.5l14-1" stroke="#1010b0" strokeWidth={4} />
      <circle cx="1838" cy="607" r="7" fill="#0c0c9c" />
      <circle cx="1782" cy="601" r="7.5" fill="#18a8b0" />
      <circle cx="1780" cy="599" r="4" fill="#38d4dc" />
      <g fontSize={12}>
        <text x="1765" y="538" fill="#20a030">
          Y
        </text>
        <text x="1750" y="663" fill="#e02030">
          X
        </text>
        <text x="1848" y="606" fill="#2020d0">
          Z
        </text>
      </g>
    </svg>
  );
}

const legend = [
  { mark: "A", text: "Pressure: 1.55e+007 Pa", color: "bg-[#ff3030]" },
  { mark: "B", text: "Pressure 2: 2.e+007 Pa", color: "bg-[#ff3030]" },
  { mark: "C", text: "Pressure 3: 53460 Pa", color: "bg-[#ff3030]" },
  { mark: "D", text: "Frictionless Support", color: "bg-[#6a5cf0]" },
];

function ScaleBar() {
  return (
    <div className="absolute bottom-[17px] left-[550px] w-[354px] leading-4">
      <div className="flex justify-between whitespace-nowrap">
        <span className="flex w-0 justify-center">0</span>
        <span className="flex w-0 justify-center">0.005</span>
        <span className="w-0">
          <span className="-ml-3">0.01 (m)</span>
        </span>
      </div>
      <div className="flex h-[11px] border border-black">
        <div className="flex-1 bg-black" />
        <div className="flex-1 bg-white" />
        <div className="flex-1 bg-black" />
        <div className="flex-1 bg-white" />
      </div>
      <div className="flex justify-around pt-0.5">
        <span>0.0025</span>
        <span>0.0075</span>
      </div>
    </div>
  );
}

function Viewport() {
  return (
    <main className="relative flex-1 overflow-hidden border-t border-l-2 border-[#70757c] bg-linear-to-b from-[#6a8bdd] via-[#adbfee] to-white">
      <Pipe />
      <div className="relative flex items-start justify-between pt-4 pr-6 pl-4">
        <div>
          <div className="leading-4">
            <p className="font-bold">C: Static Structural</p>
            <p>Static Structural</p>
            <p>Time: 1. s</p>
            <p>1/23/2019 1:25 PM</p>
          </div>
          <ul className="mt-4 flex flex-col gap-1">
            {legend.map((item) => (
              <li key={item.mark} className="flex items-center gap-[5px] leading-4">
                <span className={`flex h-4 w-[17px] items-center justify-center border border-black font-bold ${item.color}`}>
                  {item.mark}
                </span>
                {item.text}
              </li>
            ))}
          </ul>
        </div>
        <div className="pt-2 text-right text-white">
          <p className="text-[26px] leading-7 font-bold">ANSYS</p>
          <p className="text-base leading-5">16.0</p>
        </div>
      </div>
      <ScaleBar />
      <Triad />
    </main>
  );
}

function Slash({ back }: { back?: boolean }) {
  return (
    <svg viewBox="0 0 10 17" className="h-[17px] w-[10px] shrink-0" aria-hidden="true">
      <path d={back ? "M1 0l7 17M5 8l-4 9" : "M9 0L2 17"} fill="none" stroke="#000" />
    </svg>
  );
}

function ViewTabs() {
  return (
    <div className="flex h-[17px] shrink-0 items-center border-r border-b-2 border-l-2 border-black border-l-[#70757c] bg-[#f0f0f0]">
      <button className="flex h-full items-center bg-white pr-1 font-bold">
        <Slash back />
        Geometry
      </button>
      <div className="flex h-full flex-1 items-center border-t border-black">
        <Slash />
        <button className="px-px">Print Preview</button>
        <Slash back />
        <button className="px-px">Report Preview</button>
        <Slash />
      </div>
    </div>
  );
}

function TabSlant() {
  return (
    <svg viewBox="0 0 20 20" className="-ml-3 h-5 w-5 shrink-0" fill="none" aria-hidden="true">
      <path d="M0 0l16 18 4 1.5" stroke="#808080" />
    </svg>
  );
}

function Graph() {
  return (
    <section className="flex min-w-0 flex-col">
      <PanelHeader title="Graph" />
      <div className="flex flex-1 flex-col border-r border-b border-l-2 border-[#d8d8d8] border-l-[#808080] bg-white pt-[3px] pr-[22px] pb-9 pl-8">
        <p className="pr-0.5 text-right leading-4 font-bold">1.</p>
        <div className="flex flex-1">
          <div className="mt-[5px] flex-1 border border-r-0 border-[#a0a0a0]" />
          <div className="w-[3px] bg-black" />
        </div>
      </div>
      <div className="flex h-[22px] shrink-0 items-start bg-[#f6f6f6] pl-[18px]">
        <TabSlant />
        <button className="h-5 rounded-br-sm border-r border-b border-[#808080] pr-1.5">Messages</button>
        <button className="h-5 border-b border-[#808080] px-1">Graphics Annotations</button>
        <TabSlant />
        <button className="h-5 rounded-br-sm border-r border-b border-[#808080] px-1.5 font-bold">Graph</button>
      </div>
    </section>
  );
}

function StatusBar() {
  const cell = "flex h-full items-center border-t border-l border-[#a0a0a0] pl-0.5";
  return (
    <footer className="flex h-[21px] shrink-0 gap-[3px] bg-[#f0f0f0]">
      <div className={`${cell} w-[517px]`} />
      <div className={`${cell} w-[246px]`} />
      <div className={`${cell} w-[209px] gap-[3px]`}>
        <Icon name="messages" />
        2 Messages
      </div>
      <div className={`${cell} flex-1`}>No Selection</div>
      <div className={`${cell} w-[440px] gap-4`}>
        <span>Metric (m, kg, N, s, V, A)</span>
        <span>Degrees</span>
        <span>rad/s</span>
        <span>Kelvin</span>
      </div>
      <div className="flex w-9 items-end justify-end">
        <svg viewBox="0 0 14 14" className="size-[14px]" stroke="#808080" aria-hidden="true">
          <path d="M1 14L14 1M6 14l8-8M11 14l3-3" />
        </svg>
      </div>
    </footer>
  );
}

const windowButtons = [
  { name: "Minimize", d: "M3 8.5h10" },
  { name: "Restore", d: "M3.5 6.5h7v7h-7zM5.5 6V4.5h7v7H11" },
  { name: "Close", d: "M3.5 3.5l9 9M12.5 3.5l-9 9" },
];

export default function App() {
  return (
    <div className="flex h-screen flex-col overflow-hidden bg-[#f6f6f6] font-['Open_Sans',sans-serif] text-[11px] text-black">
      <div className="flex h-6 shrink-0 items-center bg-white pl-[2px]">
        <svg viewBox="0 0 16 16" className="size-4" aria-hidden="true">
          <circle cx="8" cy="8" r="8" fill="#b81018" />
          <path d="M4 12V4.5l4 4 4-4V12" fill="none" stroke="#fff" strokeWidth={2} />
        </svg>
        <h1 className="pl-[5px] text-xs">C : Static Structural - Mechanical [ANSYS Multiphysics]</h1>
        <div className="mr-0.5 ml-auto flex pb-1">
          {windowButtons.map(({ name, d }) => (
            <button key={name} aria-label={name} className="flex w-[46px] justify-center">
              <svg viewBox="0 0 16 16" className="size-4" fill="none" stroke="#000" aria-hidden="true">
                <path d={d} />
              </svg>
            </button>
          ))}
        </div>
      </div>
      <Toolbars />
      <div className="flex min-h-0 flex-1 gap-[5px] pb-[5px]">
        <aside className="flex w-[455px] shrink-0 flex-col gap-[5px]">
          <Outline />
          <Details />
        </aside>
        <div className="flex min-w-0 flex-1 flex-col pr-px">
          <Viewport />
          <ViewTabs />
          <div className="mt-[6px] grid h-72 shrink-0 grid-cols-[10fr_7fr] gap-[6px]">
            <Graph />
            <section className="flex min-w-0 flex-col">
              <PanelHeader title="Tabular Data" />
              <div className="flex-1 border-t border-l-2 border-[#707070] bg-[#a0a0a0]" />
            </section>
          </div>
        </div>
      </div>
      <StatusBar />
    </div>
  );
}
